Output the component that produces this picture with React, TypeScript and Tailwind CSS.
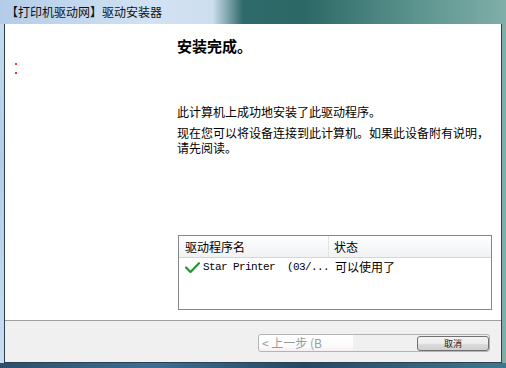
import React from "react";

const cjk = { fontFamily: '"Noto Sans CJK SC", "Noto Sans", sans-serif' };

function Check() {
  return (
    <svg width="15" height="11" viewBox="0 0 15 11" className="shrink-0">
      <path d="M1 5.5 L5.5 10 L14 1.2" fill="none" stroke="#22962f" strokeWidth="2.2" strokeLinecap="round" strokeLinejoin="round" />
    </svg>
  );
}

export default function App() {
  return (
    <div
      className="w-[506px] h-[368px] flex flex-col overflow-hidden bg-[linear-gradient(90deg,#b3cde8_0%,#d2e2f2_30%,#cddeee_42%,#2f6a6a_48%,#2c6866_60%,#5b938e_82%,#80aea8_100%)]"
      style={cjk}
    >
      <div className="h-[24px] flex items-center pl-[6px] text-[12px] leading-[12px] text-[#111]">
        【打印机驱动网】驱动安装器
      </div>
      <div className="flex-1 flex">
        <div className="w-[4px] bg-[linear-gradient(180deg,#c4daee_0%,#b3cde6_40%,#c9ddef_100%)]" />
        <div className="flex-1 flex flex-col border-l border-r border-b border-[#2d3f52] bg-white">
          <div className="relative flex-1 flex flex-col pl-[172px] pr-[9px] bg-white">
            <div className="absolute left-[10px] top-[39px] w-[2px] h-[2px] bg-[#e04040]" />
            <div className="absolute left-[10px] top-[48px] w-[2px] h-[2px] bg-[#e04040]" />
            <div className="mt-[13px] text-[15px] leading-[17px] font-bold text-black">安装完成。</div>
            <div className="mt-[51px] text-[12px] leading-[14px] text-black">此计算机上成功地安装了此驱动程序。</div>
            <div className="mt-[6px] text-[12px] leading-[15px] text-black whitespace-nowrap">
              现在您可以将设备连接到此计算机。如果此设备附有说明，
            </div>
            <div className="text-[12px] leading-[15px] text-black">请先阅读。</div>
            <div className="mt-[80px] ml-[1px] w-[314px] h-[75px] border border-[#828790] flex flex-col bg-white">
              <div className="h-[22px] flex border-b border-[#d5d5d5] bg-[linear-gradient(180deg,#ffffff_0%,#f7f8f9_50%,#f1f2f4_100%)] text-[12px] text-black">
                <div className="w-[150px] border-r border-[#e3e4e6] flex items-center pl-[6px]">驱动程序名</div>
                <div className="flex-1 flex items-center pl-[5px]">状态</div>
              </div>
              <div className="h-[18px] flex items-center text-[12px] text-black">
                <div className="w-[151px] flex items-center pl-[6px] gap-[3px]">
                  <Check />
                  <span className="text-[11px] tracking-[-0.6px] whitespace-pre" style={{ fontFamily: '"Liberation Mono", monospace' }}>
                    Star Printer  (03/...
                  </span>
                </div>
                <div className="flex-1 pl-[5px]">可以使用了</div>
              </div>
            </div>
          </div>
          <div className="h-[42px] border-t border-[#a0a0a0] bg-[#f0f0f0] pl-[253px] pt-[13px]">
            <div className="w-[232px] h-[18px] border border-[#b4b4b4] rounded-[3px] flex bg-[#f0f0f0]">
              <div className="w-[94px] h-full bg-[linear-gradient(180deg,#ffffff_0%,#fbfbfb_70%,#f6eef2_100%)] rounded-l-[3px] flex items-center pl-[3px] text-[12px] text-[#9a9a9a] leading-[12px]">
                &lt; 上一步 (B
              </div>
              <div className="flex-1" />
              <div className="w-[72px] h-[15px] self-end border border-[#707070] rounded-[3px] bg-[linear-gradient(180deg,#f4f4f4_0%,#ebebeb_50%,#dddddd_51%,#cfcfcf_100%)] flex items-center justify-center text-[9px] leading-[9px] text-[#222]">
                取消
              </div>
            </div>
          </div>
        </div>
        <div className="w-[4px]" />
      </div>
      <div className="h-[5px] bg-[linear-gradient(90deg,#2c4e6c_0%,#3b6f91_30%,#254866_60%,#3d7890_100%)]" />
    </div>
  );
}
